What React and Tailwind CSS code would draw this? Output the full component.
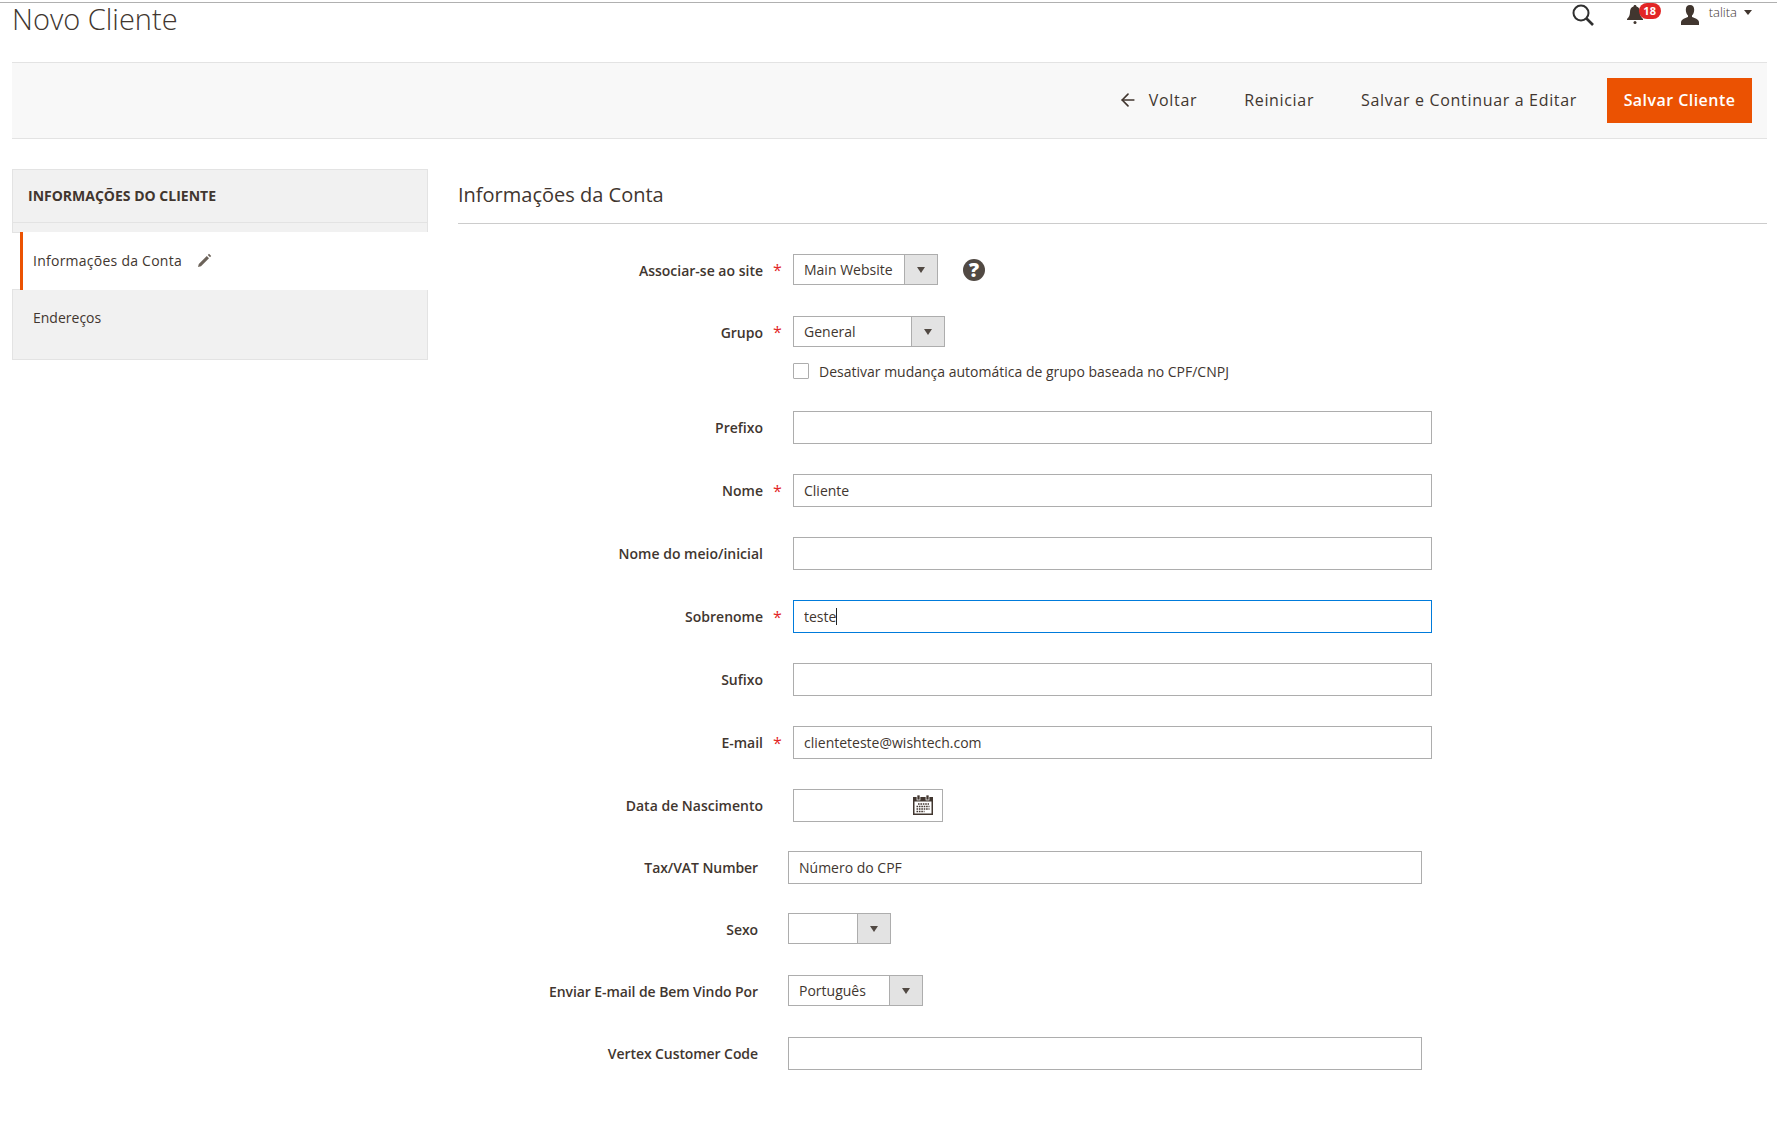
import React from 'react'
import { ArrowLeft } from 'lucide-react'

function Arrow(){
  return <span className="w-0 h-0 border-x-[4px] border-x-transparent border-t-[6px] border-t-[#514943]" />
}

function Select({value, width}){
  return (
    <div className={"flex h-[31px] border border-[#adadad] bg-white " + width}>
      <div className="flex-1 px-[10px] text-sm leading-[29px] text-[#41362f] whitespace-nowrap">{value}</div>
      <div className="flex w-[33px] items-center justify-center border-l border-[#adadad] bg-[#e3e3e3]"><Arrow /></div>
    </div>
  )
}

function Input({value, focus, width='w-[639px]'}){
  return (
    <div className={"relative " + width}>
      <input readOnly value={value || ''} className={"block w-full h-[33px] border bg-white px-[10px] text-sm text-[#41362f] outline-none " + (focus ? 'border-[#007bdb]' : 'border-[#adadad]')} />
      {focus && <span className="absolute left-[43px] top-[8px] w-px h-[17px] bg-[#222]" />}
    </div>
  )
}

function Row({label, required, narrow, select, className, children}){
  return (
    <div className={"flex items-center " + (className || '')}>
      <label className={"text-right text-sm font-semibold text-[#41362f] whitespace-nowrap " + (narrow ? 'w-[300px] tracking-[-0.08px]' : 'w-[305px]') + (select ? ' pt-[2px]' : '')}>{label}</label>
      <span className="w-[30px] pl-[10px] text-[#e22626] text-base leading-none">{required ? '*' : ''}</span>
      {children}
    </div>
  )
}

function Header(){
  return (
    <div className="flex justify-between h-[59px] pl-[12px]">
      <h1 className="text-[29px] leading-[34px] -mt-px font-light text-[#41362f]">Novo Cliente</h1>
      <div className="flex items-start pt-0 text-[#41362f]">
        <svg width="24" height="24" viewBox="0 0 24 24" fill="none" stroke="#303030" strokeWidth="2" className="mr-[32px]">
          <circle cx="10" cy="10" r="7.5" />
          <path d="M15.5 15.5 L22 22" strokeWidth="2.6" />
        </svg>
        <div className="relative w-[20px] h-[22px] mr-[27px] mt-[2px]">
          <svg width="16" height="19" viewBox="0 0 16 19" fill="#41362f">
            <path d="M8 0c1 0 1.500.7 1.500 1.500C12 2.300 13 4.500 13 7c0 3 1 5 3 7v1H0v-1c2-2 3-4 3-7 0-2.500 1-4.700 3.500-5.500C6.500.7 7 0 8 0z" />
            <circle cx="8" cy="17.500" r="1.500" />
          </svg>
          <span className="absolute left-[12px] -top-[2px] w-[22px] h-[16px] rounded-full bg-[#e22626] text-white text-[11px] font-bold leading-[16px] text-center">18</span>
        </div>
        <svg width="20" height="20" viewBox="0 0 20 20" fill="#41362f" className="ml-[6px] mt-[2px]">
          <path d="M10 0c2.800 0 4.200 2 4.200 4.800 0 2.500-1 4.700-2.200 5.700v1.500c2 .8 7 2 7 5.500V20H1v-2.500c0-3.500 5-4.700 7-5.500v-1.500C6.800 9.500 5.800 7.300 5.800 4.800 5.800 2 7.200 0 10 0z" />
        </svg>
        <span className="ml-[9px] text-[13px] font-light leading-[18px]">talita</span>
        <span className="ml-[7px] mt-[7px] mr-[25px] w-0 h-0 border-x-[4px] border-x-transparent border-t-[5px] border-t-[#41362f]" />
      </div>
    </div>
  )
}

function Toolbar(){
  return (
    <div className="ml-[12px] mr-[10px] h-[77px] flex items-center justify-end gap-[30px] pr-[15px] bg-[#f8f8f8] border-y border-[#e3e3e3] text-base text-[#41362f] tracking-[0.67px]">
      <div className="flex items-center font-medium -translate-y-px">
        <ArrowLeft size={20} strokeWidth={2} className="mr-[11px]" />
        <span>Voltar</span>
      </div>
      <span className="ml-[17px] font-medium -translate-y-px">Reiniciar</span>
      <span className="ml-[17px] font-medium -translate-y-px">Salvar e Continuar a Editar</span>
      <button className="w-[145px] h-[45px] pb-[2px] bg-[#eb5202] text-white font-semibold tracking-[0.45px]">Salvar Cliente</button>
    </div>
  )
}

function Sidebar(){
  return (
    <div className="w-[416px] shrink-0 text-sm text-[#41362f]">
      <div className="h-[64px] bg-[#f1f1f1] border border-[#e3e3e3]">
        <div className="h-[53px] border-b border-[#e3e3e3] pl-[15px] flex items-center font-bold uppercase">Informações do Cliente</div>
      </div>
      <div className="flex">
        <div className="w-[8px]" />
        <div className="flex-1 -mt-px h-[58px] pl-[10px] border-l-[3px] border-[#eb5202] bg-white flex items-center font-medium tracking-[0.25px]">
          <span>Informações da Conta</span>
          <svg width="15" height="15" viewBox="0 0 15 15" fill="#6b6259" className="ml-[15px] -mt-[2px]">
            <path d="M1 14l.8-3 8-8 2.200 2.200-8 8zM10.800 2l1.200-1.200 2.200 2.200-1.200 1.200z" />
          </svg>
        </div>
      </div>
      <div className="h-[71px] -mt-px bg-[#f1f1f1] border border-[#e3e3e3] pl-[20px] pt-[18px]">Endereços</div>
    </div>
  )
}

function Form(){
  return (
    <div className="mt-[30px]">
      <Row label="Associar-se ao site" required select className="h-[31px]">
        <Select value="Main Website" width="w-[145px]" />
        <span className="ml-[25px] w-[22px] h-[22px] rounded-full bg-[#514943] text-white text-[20px] font-extrabold leading-[22px] text-center">?</span>
      </Row>
      <Row label="Grupo" required select className="mt-[31px] h-[31px]">
        <Select value="General" width="w-[152px]" />
      </Row>
      <div className="flex items-center mt-[16px] pl-[335px] h-[16px] text-sm text-[#41362f]">
        <span className="w-[16px] h-[16px] border border-[#adadad] bg-white rounded-[1px]" />
        <span className="ml-[10px] pt-[2px]">Desativar mudança automática de grupo baseada no CPF/CNPJ</span>
      </div>
      <Row label="Prefixo" className="mt-[32px]"><Input /></Row>
      <Row label="Nome" required className="mt-[30px]"><Input value="Cliente" /></Row>
      <Row label="Nome do meio/inicial" className="mt-[30px]"><Input /></Row>
      <Row label="Sobrenome" required className="mt-[30px]"><Input value="teste" focus /></Row>
      <Row label="Sufixo" className="mt-[30px]"><Input /></Row>
      <Row label="E-mail" required className="mt-[30px]"><Input value="clienteteste@wishtech.com" /></Row>
      <Row label="Data de Nascimento" className="mt-[30px]">
        <div className="relative w-[150px]">
          <Input width="w-[150px]" />
          <svg width="20" height="20" viewBox="0 0 20 20" className="absolute right-[10px] top-[6px]">
            <rect x="0" y="2" width="20" height="18" fill="#41362f" />
            <rect x="1.500" y="6.500" width="17" height="12" fill="#fff" />
            <rect x="4" y="0" width="3" height="5" fill="#41362f" stroke="#fff" strokeWidth="0.7" />
            <rect x="13" y="0" width="3" height="5" fill="#41362f" stroke="#fff" strokeWidth="0.7" />
            <path d="M5 9h11M3.500 11.500h13M3.500 14h13M3.500 16.500h8" stroke="#41362f" strokeWidth="1.600" strokeDasharray="1.600 .8" />
          </svg>
        </div>
      </Row>
      <Row label="Tax/VAT Number" narrow className="mt-[29px]"><Input value="Número do CPF" width="w-[634px]" /></Row>
      <Row label="Sexo" narrow select className="mt-[29px] h-[31px]"><Select value="" width="w-[103px]" /></Row>
      <Row label="Enviar E-mail de Bem Vindo Por" narrow select className="mt-[31px] h-[31px]"><Select value="Português" width="w-[135px]" /></Row>
      <Row label="Vertex Customer Code" narrow className="mt-[31px]"><Input width="w-[634px]" /></Row>
    </div>
  )
}

export default function App(){
  return (
    <div className="min-h-[1121px] bg-white pt-[2px] font-['Open_Sans',sans-serif]">
      <div className="border-t border-[#b0b0b0]">
        <Header />
        <Toolbar />
        <div className="flex pt-[30px] pl-[12px] pr-[10px]">
          <Sidebar />
          <div className="flex-1 ml-[30px]">
            <div className="h-[55px] pb-[2px] border-b border-[#cccccc] flex items-center text-xl text-[#41362f]">Informações da Conta</div>
            <Form />
          </div>
        </div>
      </div>
    </div>
  )
}
